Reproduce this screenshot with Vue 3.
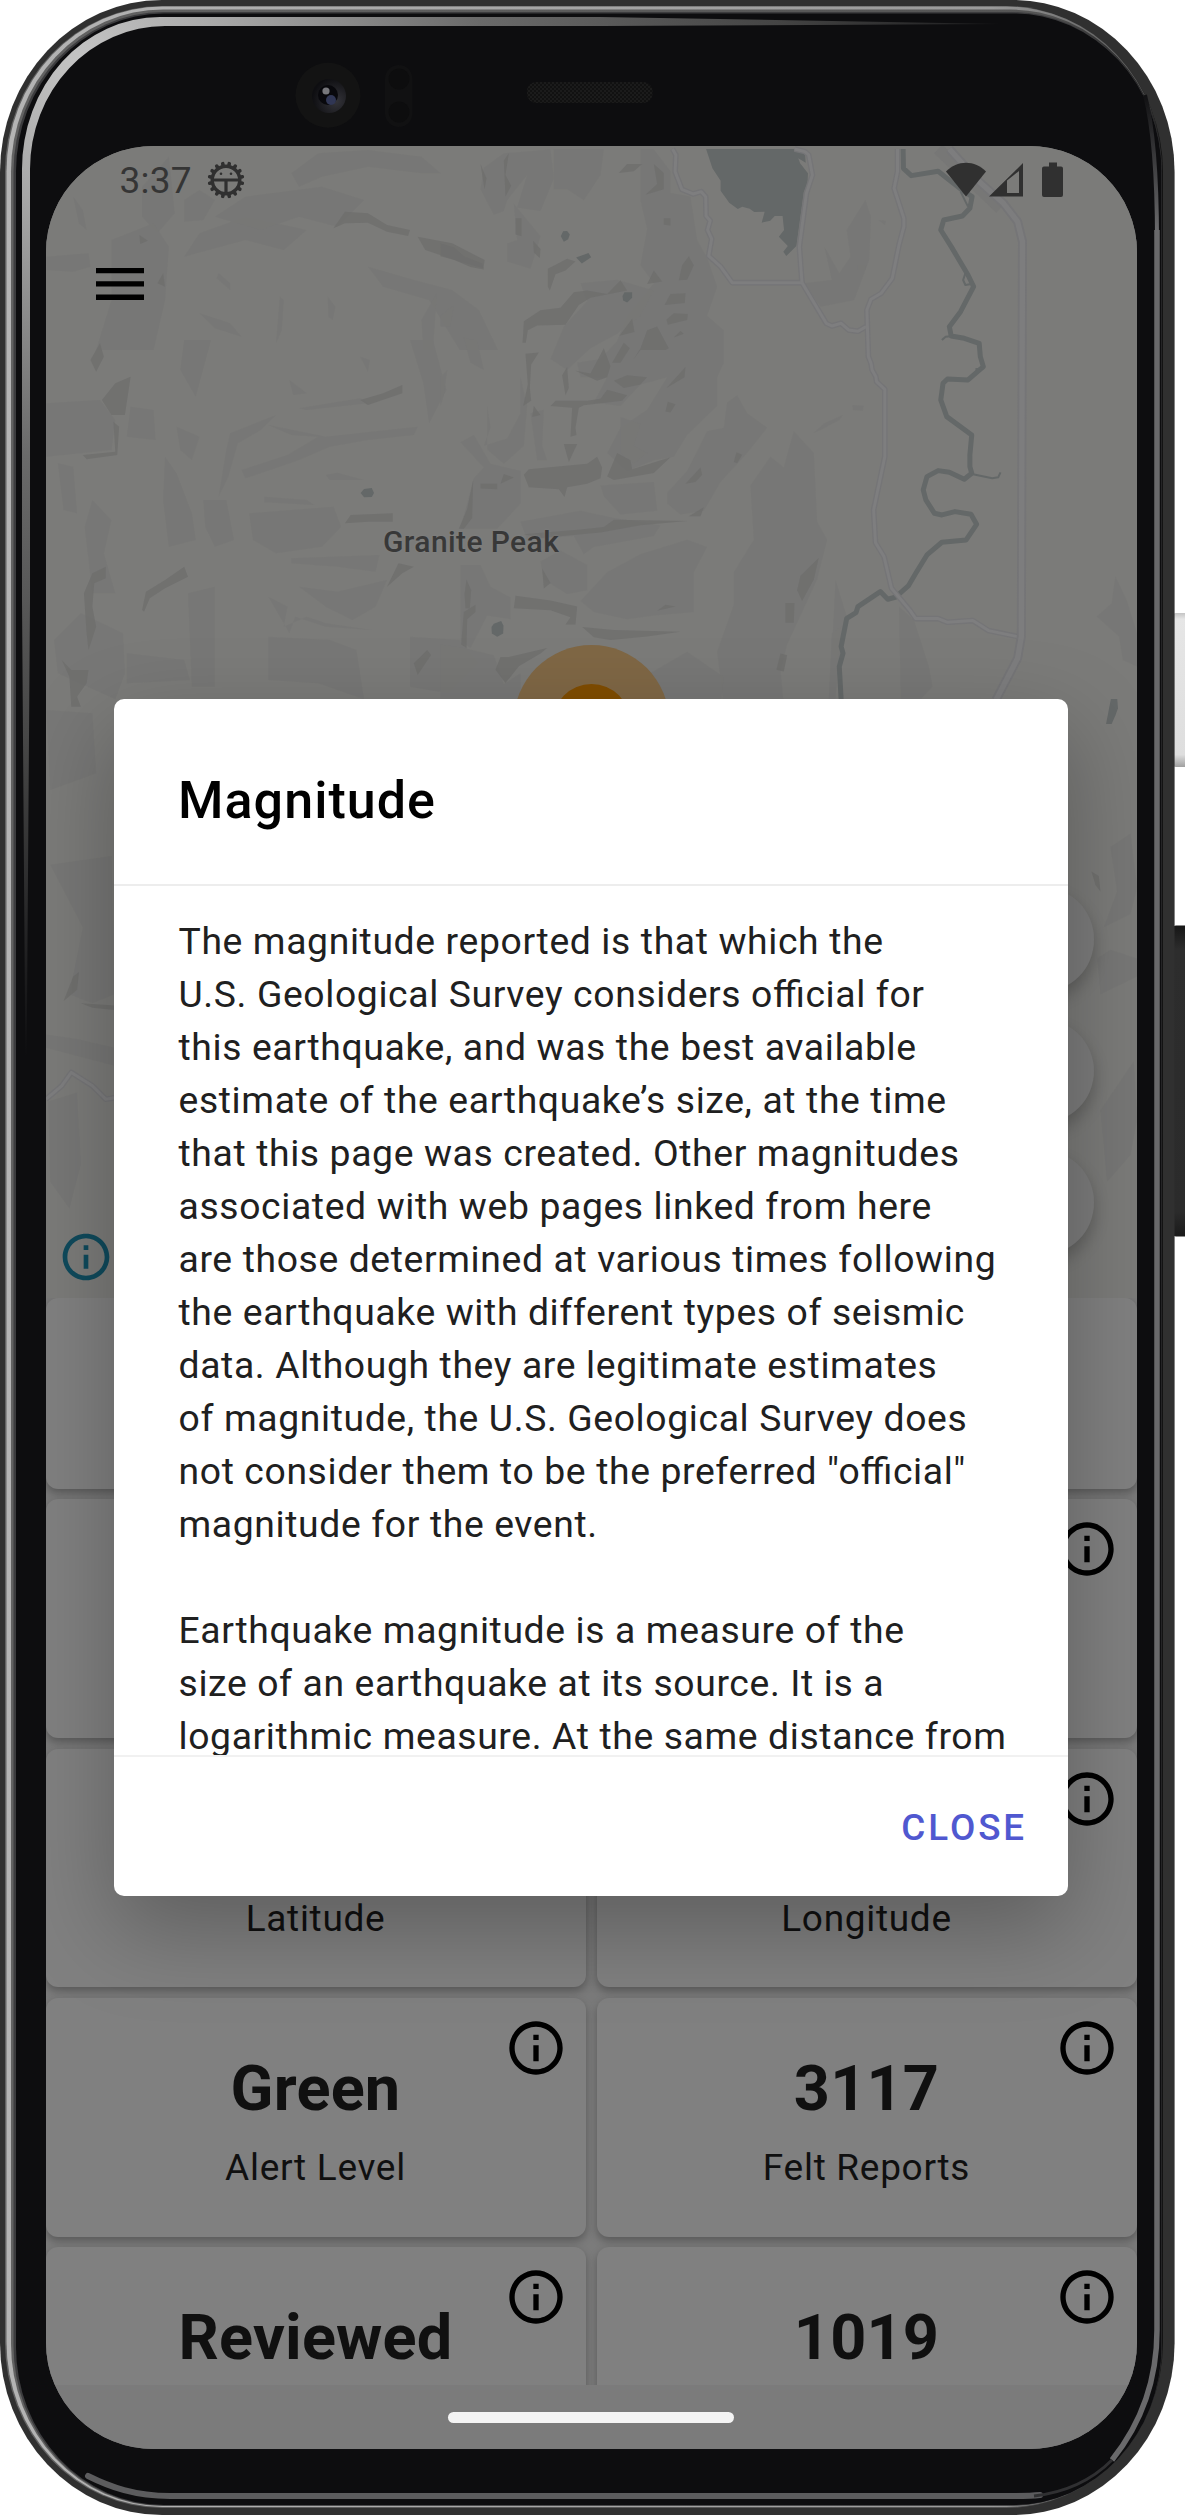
<script setup>
const lines = [
  'The magnitude reported is that which the',
  'U.S. Geological Survey considers official for',
  'this earthquake, and was the best available',
  'estimate of the earthquake’s size, at the time',
  'that this page was created. Other magnitudes',
  'associated with web pages linked from here',
  'are those determined at various times following',
  'the earthquake with different types of seismic',
  'data. Although they are legitimate estimates',
  'of magnitude, the U.S. Geological Survey does',
  'not consider them to be the preferred "official"',
  'magnitude for the event.',
  '',
  'Earthquake magnitude is a measure of the',
  'size of an earthquake at its source. It is a',
  'logarithmic measure. At the same distance from',
]

const cards = [
  { value: '', label: '', wide: true },
  { value: '', label: '', info: true },
  { value: '', label: '', info: true },
  { value: '', label: 'Latitude', info: true },
  { value: '', label: 'Longitude', info: true },
  { value: 'Green', label: 'Alert Level', info: true },
  { value: '3117', label: 'Felt Reports', info: true },
  { value: 'Reviewed', label: '', info: true },
  { value: '1019', label: '', info: true },
]

// Hill shading facets, grouped by map tile: soft slopes first, then ridges.
const reliefNW = {
  soft: [
    '480,770 520,700 640,650 720,670 800,690 740,750 640,720',
    '760,520 830,460 960,450 1100,470 1150,520 1100,520 960,500 840,530 780,560',
    '960,800 1080,840 1180,870 1250,930 1300,1050 1200,1050 1120,900 1000,860',
    '120,770 230,760 235,800 190,815 120,810',
    '520,940 600,970 630,1010 560,985',
    '1100,960 1140,880 1130,1050 1105,1050',
    '190,590 215,630 225,690 205,670',
    '370,560 440,470 455,640 410,700 370,650',
    '290,720 400,670 440,740 430,900 400,1050 250,1050 290,900',
    '640,590 840,560 950,600 880,680 780,650 680,690 560,650',
    '570,820 600,850 600,870 565,835',
    '720,1030 730,890 740,900 735,990',
    '855,890 875,920 868,960 857,950',
    '480,600 520,570 560,600 530,660 480,665',
  ],
  hard: [
    '870,685 900,635 960,640 1010,675 1070,690 1065,708 1010,695 960,668 900,670',
    '1090,710 1180,730 1265,780 1262,805 1200,785 1110,750',
    '410,850 425,820 430,860',
    '363,705 385,722 365,732',
  ],
}
const reliefW = {
  soft: [
    '600,280 720,225 680,270 620,310 595,410 570,470 590,330',
    '700,255 850,290 1090,260 1080,285 960,300 860,320 780,360 640,415 630,390 750,345 830,290 760,285',
    '780,205 940,175 960,190 800,210',
    '760,655 990,645 980,695 880,680 760,670',
    '780,740 880,755 1010,720 980,800 920,840 850,800',
    '330,940 480,960 495,1020 330,1030',
    '700,890 860,900 930,930 950,1078 830,1030 700,1020',
    '430,350 460,400 500,520 510,600 440,620 425,480',
    '120,190 260,180 300,240 290,330 120,350',
    '340,200 400,210 405,300 330,290',
    '460,260 520,290 500,360 470,330',
    '650,520 870,500 890,560 840,620 720,640 660,600',
    '1070,0 1130,0 1165,150 1120,250 1105,130',
    '530,480 590,480 610,600 560,620 535,560',
    '690,470 800,480 820,495 690,487',
    '850,405 880,398 950,420 860,420',
    '490,760 560,740 560,1040 500,1040',
    '150,370 190,380 200,520 165,510',
    '240,480 290,540 270,640 300,760 240,760 220,560',
    '140,900 210,820 320,880 325,1000 300,1078 150,1000',
    '120,1110 240,1120 250,1300 130,1350',
    '480,0 550,0 510,170 470,90',
    '940,50 965,60 960,95',
    '755,120 800,160 765,165',
    '1070,890 1200,900 1250,970 1170,1060 1070,1040',
    '700,770 750,800 740,860 800,830 850,850 970,870 850,860 770,830 755,880',
  ],
  hard: [
    '235,60 260,10 270,50 250,95',
    '265,180 300,130 340,110 325,225 290,225',
    '215,345 300,335 295,245 310,260 305,345 225,358',
    '940,180 1000,160 1050,135 1050,160 960,195',
    '900,550 915,525 1025,520 1025,545 960,545',
    '370,810 380,755 430,720 480,680 490,710 430,745 390,775 375,815',
    '225,880 218,760 240,700 275,680 275,715 245,730 240,800 250,860 230,930',
    '1010,740 1040,670 1080,680 1050,700',
    '1080,970 1115,930 1125,945 1090,1005',
    '160,960 185,990 230,990 225,1030 200,1070 210,1100 185,1100 180,1010',
  ],
}
const reliefC = {
  soft: [
    '130,60 190,20 330,10 340,90 300,180 230,170 260,80 200,150 190,180 160,190 120,120',
    '340,10 490,10 480,80 430,150 380,120 340,120',
    '600,10 640,10 690,70 690,130 750,140 770,260 800,310 830,390 800,470 850,510 850,600 830,640 830,720 740,800 700,860 640,870 560,900 500,850 540,780 620,730 680,640 600,660 540,720 460,710 500,640 420,640 410,600 480,590 530,540 560,470 640,380 600,330 620,230 600,150',
    '420,380 530,370 640,400 600,470 530,520 450,560 380,620 330,590 370,500 440,430',
    '220,160 300,250 270,340 200,320 200,270 230,260',
    '0,640 20,620 10,690 0,720',
    '70,530 110,540 130,620 90,600',
    '60,820 100,800 150,880 240,900 240,990 170,1060 60,1060 100,920 130,890',
    '140,720 150,780 130,830 200,810 240,740 240,640 260,720 250,830 190,880 140,840',
    '270,740 310,730 305,830 320,870 290,870',
    '540,750 600,770 580,830 620,850 580,880 540,850',
    '480,940 640,930 650,1010 540,1020 490,970',
    '680,960 740,900 800,790 850,780 860,710 890,690 920,740 980,780 920,850 840,930 790,1010 720,1020 680,990',
    '240,1040 420,1010 520,1030 660,1050 640,1080 460,1110 430,1130 400,1080 260,1090',
    '300,1150 360,1120 440,1160 440,1230 380,1240 310,1200',
    '420,1260 500,1180 600,1130 740,1090 800,1110 760,1180 760,1290 640,1300 560,1310 460,1290',
    '930,940 990,860 1030,890 1060,790 1120,850 1130,1040 1160,1090 1130,1200 1100,1260 1040,1380 1020,1450 1030,1550 850,1550 830,1400 880,1270 880,1180 940,1090',
    '0,1380 70,1390 160,1410 190,1490 240,1460 240,1550 0,1550',
    '610,1470 740,1400 850,1470 840,1550 680,1550',
    '60,1160 120,1160 150,1220 210,1250 210,1310 140,1300 90,1390 60,1370',
    '0,470 40,440 30,500 0,500',
  ],
  hard: [
    '0,270 40,280 70,305 125,325 130,342 90,335 40,315 0,305',
    '120,50 138,90 132,120',
    '190,40 205,20 195,80 212,110 195,140',
    '225,200 243,200 243,250 225,245',
    '278,262 300,285 298,310 280,295',
    '322,340 380,312 405,320 375,345 345,355 328,400 322,390',
    '248,520 250,485 300,455 360,448 400,405 440,400 500,410 540,372 560,400 450,420 415,440 375,495 290,497 262,510 256,545 246,545',
    '255,575 295,572 272,605 268,670 272,705 248,720 262,660',
    '330,720 345,705 440,705 480,700 500,675 560,690 545,705 430,718 415,725 405,780 408,800 390,805 395,725',
    '365,635 380,612 385,670 375,690',
    '405,622 450,630 490,560 510,610 500,640 470,650',
    '520,650 560,635 620,640 600,660 550,670',
    '537,525 575,478 582,515',
    '580,590 600,560 620,510 650,500 685,560 675,565 600,565',
    '515,600 550,545 568,560 540,600',
    '265,895 440,880 470,860 485,890 480,920 440,935 380,945 372,972 355,950 265,945 250,910',
    '500,915 530,850 570,870 575,895 690,862 640,905 520,925',
    '250,1075 420,1062 490,1055 520,1035 740,1038 600,1050 480,1070 300,1085',
    '735,935 780,890 785,910 765,930',
    '745,1025 790,1000 780,1025',
    '880,875 888,848 905,855 890,878',
    '678,670 735,612 732,640',
    '620,382 640,345 665,375',
    '715,372 725,330 745,305 760,330 740,370',
    '640,50 670,75 670,120 615,135 650,105',
    '535,75 560,50 605,50 580,70',
    '670,200 690,200 690,220 670,218',
    '678,480 700,463 742,465 740,482 682,495',
    '672,440 690,410 735,408 733,435',
    '700,530 720,512 730,520',
    '675,735 682,708 705,715 690,738',
    '220,1280 225,1245 330,1258 410,1275 405,1325 375,1325 390,1305 330,1285',
    '425,1332 520,1340 720,1345 620,1358 510,1368 460,1360',
    '165,1450 180,1415 205,1415 320,1390 300,1405 235,1440 195,1487',
    '55,1060 80,1005 98,925 95,1030 70,1060',
    '120,935 170,935 170,950 120,948',
    '180,935 190,908 220,918',
    '72,1240 78,1200 92,1230 88,1280 75,1280',
    '70,1290 105,1270 105,1290 80,1310 78,1390 62,1380',
    '305,1170 330,1210 310,1225',
    '650,1287 675,1270 705,1275',
    '1070,1230 1080,1190 1135,1140 1120,1200 1085,1260',
    '1035,1265 1062,1265 1060,1320 1035,1320',
    '1008,1450 1020,1405 1040,1410 1030,1455',
    '370,825 410,825 385,875',
    '280,720 300,745 275,750',
  ],
}
const reliefE = {
  soft: [
    '800,1820 840,1860 880,2000 890,2060 860,2096 805,2096',
    '570,1300 600,1270 650,1245 640,1260 590,1290',
    '1330,1850 1370,1810 1380,1730 1410,1800 1438,1900 1438,2000 1400,1980 1390,1910',
    '600,740 640,820 670,770 660,690 710,600 725,650 720,780 680,900 590,920 545,850 620,840',
    '675,1215 705,1217 703,1232 677,1230',
    '690,795 712,795 710,810 690,810',
    '745,660 765,662 762,675',
    '630,1740 660,1850 640,1990 620,1960',
    '620,1900 645,1880 630,2096 612,2096',
  ],
}
const roads = [
  'M193,447 202,465 200,515 218,568 248,582 270,575 282,590 283,648 294,662 287,690 298,717 290,768 322,800 353,848 540,848 605,970 620,978 645,970 665,990 690,994 712,980',
  'M520,447 548,455 558,465 568,525 552,580 533,740 540,848',
  'M796,447 796,515 787,565 813,655 813,680 800,735 782,835 752,880 725,898 714,930 718,1070 725,1090 728,1110 738,1130 740,1145 762,1168 762,1370 732,1530 737,1628 760,1670 780,1765 830,1832 845,1856 905,1856 930,1867 998,1862 1040,1892 1118,1910',
]
const highway = 'M935,447 1010,540 1080,610 1118,665 1131,725 1128,1910 1118,1975 1060,2100'
const gearTeeth = Array.from({ length: 16 }, (_, i) => i * 22.5)
</script>

<template>
  <div class="stage">
    <div class="phone">
      <svg class="body" viewBox="0 0 1185 2515" aria-hidden="true">
        <defs>
          <linearGradient id="rimSide" x1="0" x2="1" y1="0" y2="0">
            <stop offset="0" stop-color="#b4b4b4" />
            <stop offset="0.85" stop-color="#9a9a9a" />
            <stop offset="0.985" stop-color="#555" />
            <stop offset="1" stop-color="#151515" />
          </linearGradient>
          <linearGradient id="rimSoft" x1="0" x2="1" y1="0" y2="0">
            <stop offset="0" stop-color="#626262" />
            <stop offset="0.9" stop-color="#555" />
            <stop offset="1" stop-color="#111" />
          </linearGradient>
          <radialGradient id="glare" gradientUnits="userSpaceOnUse" cx="80" cy="60" r="1000">
            <stop offset="0" stop-color="#c4c4c4" />
            <stop offset="0.15" stop-color="#a6a6a6" />
            <stop offset="0.4" stop-color="#6a6a6a" />
            <stop offset="0.7" stop-color="#444" />
            <stop offset="1" stop-color="#0d0d0f" />
          </radialGradient>
          <linearGradient id="edge" gradientUnits="userSpaceOnUse" x1="0" x2="0" y1="90" y2="230">
            <stop offset="0" stop-color="#0d0d0f" />
            <stop offset="1" stop-color="#69696b" />
          </linearGradient>
          <linearGradient id="power" x1="0" x2="0" y1="0" y2="1">
            <stop offset="0" stop-color="#c4c4c4" />
            <stop offset="0.04" stop-color="#e6e6e6" />
            <stop offset="0.92" stop-color="#dedede" />
            <stop offset="1" stop-color="#a0a0a0" />
          </linearGradient>
          <linearGradient id="volume" x1="0" x2="0" y1="0" y2="1">
            <stop offset="0" stop-color="#161616" />
            <stop offset="0.08" stop-color="#2d2d2d" />
            <stop offset="0.92" stop-color="#2b2b2b" />
            <stop offset="1" stop-color="#1a1a1a" />
          </linearGradient>
          <pattern id="mesh" width="4" height="4" patternUnits="userSpaceOnUse">
            <rect width="4" height="4" fill="#1b1b1b" />
            <rect width="2" height="2" fill="#111" />
            <rect x="2" y="2" width="2" height="2" fill="#111" />
          </pattern>
          <radialGradient id="lens" cx="0.7" cy="0.65" r="0.7">
            <stop offset="0" stop-color="#34343a" />
            <stop offset="1" stop-color="#0e0e11" />
          </radialGradient>
        </defs>
        <rect x="1173" y="613" width="16" height="154" rx="3" fill="url(#power)" />
        <rect x="1173" y="925.5" width="16" height="311" rx="3" fill="url(#volume)" />
        <rect width="1174.6" height="2515" rx="162" ry="172" fill="#303030" />
        <rect x="5" y="6" width="1158" height="2502" rx="157" ry="166" fill="url(#rimSoft)" />
        <rect x="6.5" y="6.5" width="1156" height="2500.5" rx="156" ry="165" fill="url(#rimSide)" />
        <rect x="11" y="9.5" width="1151" height="2496.5" rx="152" ry="162" fill="url(#rimSoft)" />
        <rect x="13.5" y="12" width="1148.5" height="2493.5" rx="150" ry="160" fill="#3c3c3e" />
        <rect x="16" y="13.5" width="1145.5" height="2491.5" rx="148" ry="158" fill="#0d0d0f" />
        <path fill="url(#glare)" d="M26 1150 L22 600 V170 A138 152 0 0 1 160 17 H600 L1000 24 L600 26 H165 A135 143 0 0 0 30 170 V600 Z" />
        <path fill="none" stroke="url(#edge)" stroke-width="4" d="M1145 95 C1154 130 1157 175 1157 240" />
        <path fill="none" stroke="#69696b" stroke-width="5.5" d="M1157 230 V2330 C1157 2375 1144 2420 1112 2460" />
        <path fill="none" stroke="#5c5c5e" stroke-width="6" stroke-linecap="round" d="M1040 2495 C1030 2496 1020 2496 1010 2496 H170 C135 2496 110 2487 88 2476" />
        <path fill="none" stroke="#303032" stroke-width="3" d="M1112 2460 C1088 2484 1060 2493 1034 2496" />
        <circle cx="328" cy="95.3" r="32.5" fill="#131313" />
        <circle cx="329" cy="96" r="17" fill="url(#lens)" />
        <circle cx="328" cy="95" r="10" fill="#08080c" />
        <circle cx="331" cy="100" r="5" fill="#303654" />
        <circle cx="326" cy="91" r="3.6" fill="#77777c" />
        <rect x="385" y="65" width="27.5" height="62" rx="13.7" fill="#111112" />
        <circle cx="399" cy="79" r="10.5" fill="#0d0d0e" />
        <circle cx="399" cy="112" r="10.5" fill="#0d0d0e" />
        <rect x="527" y="82" width="125.5" height="21" rx="9" fill="url(#mesh)" />
      </svg>

      <div class="screen">
        <section class="map">
          <svg class="terrain" viewBox="0 0 1091 1152" aria-hidden="true">
            <g transform="translate(-45.5 -146)">
              <g transform="scale(.3827 .3333)">
                <polygon v-for="p in reliefNW.soft" :key="p" class="soft" :points="p" />
                <polygon v-for="p in reliefNW.hard" :key="p" class="hard" :points="p" />
              </g>
              <g transform="translate(0 340) scale(.3827 .3333)">
                <polygon v-for="p in reliefW.soft" :key="p" class="soft" :points="p" />
                <polygon v-for="p in reliefW.hard" :key="p" class="hard" :points="p" />
                <polygon class="water" points="941,459 950,447 970,444 976,459 970,471 950,472" />
              </g>
              <g transform="translate(440 146) scale(.3333 .3612)">
                <polygon v-for="p in reliefC.soft" :key="p" class="soft" :points="p" />
                <polygon v-for="p in reliefC.hard" :key="p" class="hard" :points="p" />
                <polygon class="water" points="361,250 368,236 380,235 388,245 383,258 370,265" />
                <polygon class="water" points="407,309 444,296 452,308 424,325" />
                <polygon class="water" points="546,415 552,405 575,405 575,420 560,433 548,428" />
                <polygon class="water" points="153,1332 160,1323 182,1315 189,1328 188,1350 170,1359 154,1350" />
              </g>
              <g transform="translate(600 0) scale(.3731 .3333)">
                <polygon v-for="p in reliefE.soft" :key="p" class="soft" :points="p" />
                <polygon class="water" points="283,447 520,447 548,460 550,488 530,475 535,490 556,520 555,550 545,575 525,738 498,768 490,755 502,738 478,710 492,690 488,648 467,648 455,662 432,668 440,635 412,636 400,626 380,620 368,627 345,608 322,572 322,542 300,505" />
                <polygon class="water" points="1368,2097 1385,2097 1387,2125 1380,2147 1370,2172 1355,2172" />
                <path class="band" d="M905,447 1072,625" />
                <path class="river" d="M811,447 812,505 833,527 905,514 940,545 975,575 996,590 990,625 970,648 920,660 912,690 940,740 985,825 1000,860 965,935 935,980 940,1008 975,1015 1015,1030 1018,1070 1026,1100 985,1140 930,1137 918,1150 912,1200 928,1250 995,1305 990,1365 990,1400 995,1420 975,1438 935,1417 905,1412 875,1430 865,1470 872,1500 895,1540 915,1545 950,1535 993,1543 1008,1573 980,1620 915,1627 875,1665 845,1720 825,1758 790,1792 770,1798 750,1775 690,1820 685,1838 660,1855 645,1940 650,1960 640,2000 645,2100" />
                <path class="river thin" d="M995,1422 1050,1435 1066,1432 1072,1417 M965,575 985,620 M978,820 972,840 978,855 990,853 M915,1020 925,1010 945,1008 M1005,1108 1028,1105" />
                <path v-for="r in roads" :key="r" class="casing" :d="r" />
                <path v-for="r in roads" :key="r + 'f'" class="road" :d="r" />
                <path class="casing wide" :d="highway" />
                <path class="road wide" :d="highway" />
              </g>
              <g transform="translate(0 780) scale(.3827 .4464)">
                <polygon class="soft" points="130,190 290,170 298,480 240,500 180,480 215,330" />
                <polygon class="hard" points="165,495 190,440 205,430 200,470" />
                <polygon class="hard" points="210,500 298,505 298,515 240,510" />
                <polygon class="soft" points="119,570 200,580 298,600 298,640 119,600" />
                <polygon class="soft" points="125,720 200,700 210,860 180,960 130,900" />
                <path class="casing" d="M119,715 160,685 185,655 240,685 275,715 298,712" />
                <path class="road" d="M119,715 160,685 185,655 240,685 275,715 298,712" />
              </g>
              <g transform="translate(700 780) scale(.3333 .4464)">
                <polygon class="soft" points="1230,150 1290,120 1310,240 1290,300 1210,330 1250,250" />
                <polygon class="soft" points="1190,400 1230,380 1310,400 1310,440 1200,480" />
                <polygon class="soft" points="1200,740 1300,630 1310,760 1290,840 1220,900" />
                <polygon class="hard" points="1173,205 1195,215 1200,250 1185,235" />
              </g>
              <circle cx="591" cy="723" r="78" fill="#7f6745" />
              <circle cx="591" cy="723" r="39" fill="#804d00" />
            </g>
          </svg>

          <header class="status">
            <span class="clock">3:37</span>
            <svg class="bug" viewBox="-20 -20 40 40" aria-hidden="true">
              <rect v-for="a in gearTeeth" :key="a" x="-1.8" y="-18.4" width="3.6" height="6" rx="1.6" :transform="`rotate(${a + 11.25})`" />
              <circle r="13.8" fill="none" stroke="#303030" stroke-width="3.4" />
              <path d="M-13 -1.6 H13 V1.6 H1.6 V13 H-1.6 V1.6 H-13 Z" />
              <circle cx="-5" cy="-6.300" r="1.300" />
              <circle cx="5" cy="-6.300" r="1.300" />
            </svg>
            <span class="spacer"></span>
            <svg class="signals" viewBox="0 0 118 36" aria-hidden="true">
              <path d="M0 9.600 C11 -2.200 29 -2.200 40 9.600 L20 34.500 Z" />
              <path fill-rule="evenodd" d="M43 34.500 L77 1 V34.500 Z M61 18.600 V31 H73 V9 Z" />
              <path d="M103 0.500 h8 v4 h4 a2 2 0 0 1 2 2 v26.500 a2 2 0 0 1 -2 2 h-17 a2 2 0 0 1 -2 -2 v-26.500 a2 2 0 0 1 2 -2 h5 z" />
            </svg>
          </header>

          <svg class="menu" viewBox="0 0 48 32" aria-hidden="true">
            <path d="M0 0h48v5.300H0zM0 13.300h48v5.300H0zM0 26.600h48v5.300H0z" />
          </svg>
          <span class="place">Granite Peak</span>
          <div class="fabs"><i></i><i></i><i></i></div>
          <svg class="attribution" viewBox="0 0 24 24" aria-hidden="true">
            <path d="M11 7h2v2h-2zm0 4h2v6h-2zm1-9C6.480 2 2 6.480 2 12s4.480 10 10 10 10-4.480 10-10S17.520 2 12 2zm0 18c-4.410 0-8-3.590-8-8s3.590-8 8-8 8 3.590 8 8-3.590 8-8 8z" />
          </svg>
        </section>

        <section class="cards">
          <article v-for="(c, i) in cards" :key="i" class="card" :class="{ wide: c.wide }">
            <svg v-if="c.info" class="info" viewBox="0 0 24 24" aria-hidden="true">
              <path d="M11 7h2v2h-2zm0 4h2v6h-2zm1-9C6.480 2 2 6.480 2 12s4.480 10 10 10 10-4.480 10-10S17.520 2 12 2zm0 18c-4.410 0-8-3.590-8-8s3.590-8 8-8 8 3.590 8 8-3.590 8-8 8z" />
            </svg>
            <strong>{{ c.value }}</strong>
            <span>{{ c.label }}</span>
          </article>
        </section>

        <footer class="nav"><i></i></footer>

        <div class="dialog" role="dialog">
          <h1>Magnitude</h1>
          <div class="text">
            <p v-for="(l, i) in lines" :key="i">{{ l }}</p>
          </div>
          <div class="actions"><button type="button">CLOSE</button></div>
        </div>
      </div>
    </div>
  </div>
</template>

<style>
body {
  margin: 0;
  background: #fff;
}
</style>

<style scoped>
.stage {
  width: 1185px;
  height: 2515px;
  overflow: hidden;
  background: #fff;
  font-family: Roboto, "Liberation Sans", sans-serif;
}
.phone {
  position: relative;
  box-sizing: border-box;
  width: 1185px;
  height: 2515px;
  padding: 146px 0 0 45.5px;
}
.body {
  position: absolute;
  inset: 0;
  width: 1185px;
  height: 2515px;
}
.screen {
  position: relative;
  display: flex;
  flex-direction: column;
  width: 1091px;
  height: 2303px;
  overflow: hidden;
  border-radius: 108px / 106px;
  background: #7b7b7b;
}

/* map */
.map {
  position: relative;
  flex: none;
  height: 1151.5px;
  background: #7b7b79;
}
.terrain {
  position: absolute;
  top: 0;
  left: 0;
  width: 1091px;
  height: 1152px;
}
.soft {
  fill: #777775;
  fill-opacity: 0.8;
}
.hard {
  fill: #6e6e6c;
  fill-opacity: 0.75;
}
.water {
  fill: #646868;
}
.band {
  fill: none;
  stroke: #747474;
  stroke-width: 12px;
  stroke-opacity: 0.6;
  vector-effect: non-scaling-stroke;
}
.river,
.road,
.casing {
  fill: none;
  stroke-linejoin: round;
  vector-effect: non-scaling-stroke;
}
.river {
  stroke: #646868;
  stroke-width: 5px;
}
.river.thin {
  stroke-width: 2px;
}
.casing {
  stroke: #757577;
  stroke-width: 5.6px;
}
.road {
  stroke: #7e7e7f;
  stroke-width: 3px;
}
.casing.wide {
  stroke-width: 9px;
}
.road.wide {
  stroke: #7d7d7e;
  stroke-width: 5.4px;
}
.status {
  position: relative;
  display: flex;
  align-items: center;
  height: 68px;
  padding: 0 73px 0 74px;
  fill: #303030;
  color: #353535;
}
.clock {
  padding-top: 1px;
  font-size: 37px;
  line-height: 68px;
  letter-spacing: 0.2px;
}
.bug {
  width: 40px;
  height: 40px;
  margin-left: 14px;
}
.spacer {
  flex: 1;
}
.signals {
  width: 118px;
  height: 36px;
}
.menu {
  position: relative;
  display: block;
  width: 48px;
  height: 32px;
  margin: 53.5px 0 0 50px;
}
.place {
  position: absolute;
  left: 337.5px;
  top: 375.5px;
  font-size: 30px;
  font-weight: 500;
  line-height: 40px;
  letter-spacing: 0.4px;
  color: #383838;
  white-space: nowrap;
  text-shadow: 0 0 3px #838383;
}
.fabs {
  position: absolute;
  left: 944px;
  top: 741px;
  display: flex;
  flex-direction: column;
  gap: 27px;
}
.fabs i {
  width: 104.5px;
  height: 104.5px;
  border-radius: 50%;
  background: #7c7c7c;
  box-shadow: 0 8px 16px rgba(0, 0, 0, 0.22);
}
.attribution {
  position: absolute;
  left: 12.5px;
  top: 1083px;
  width: 56px;
  height: 56px;
  fill: #0f4a5c;
}

/* cards */
.cards {
  display: grid;
  flex: none;
  grid-template-columns: 540px 540px;
  grid-template-rows: 191px repeat(4, 238.7px);
  gap: 10.7px 11px;
  height: 1087.5px;
  overflow: hidden;
}
.card {
  position: relative;
  display: flex;
  flex-direction: column;
  align-items: center;
  box-sizing: border-box;
  padding-top: 54px;
  border-radius: 12px;
  background: #808080;
  box-shadow: 0 4px 8px rgba(0, 0, 0, 0.28);
  color: #101010;
}
.card.wide {
  grid-column: 1 / -1;
}
.card strong {
  height: 81px;
  font-size: 63px;
  font-weight: 700;
  line-height: 74px;
  letter-spacing: 0.2px;
}
.card span {
  font-size: 37px;
  line-height: 70px;
  letter-spacing: 0.7px;
}
.info {
  position: absolute;
  top: 18px;
  right: 18px;
  width: 64px;
  height: 64px;
}

.nav {
  display: flex;
  flex: 1;
  align-items: flex-start;
  justify-content: center;
  background: #7b7b7b;
}
.nav i {
  width: 286.5px;
  height: 10.5px;
  margin-top: 27px;
  border-radius: 6px;
  background: #f4f4f4;
}

/* dialog */
.dialog {
  position: absolute;
  left: 68.5px;
  top: 553.3px;
  display: flex;
  flex-direction: column;
  width: 953.5px;
  height: 1196.7px;
  overflow: hidden;
  border-radius: 10px;
  background: #fff;
  box-shadow: 0 33px 90px rgba(0, 0, 0, 0.27);
}
.dialog h1 {
  flex: none;
  box-sizing: border-box;
  height: 186.5px;
  margin: 0;
  padding-left: 64px;
  border-bottom: 2px solid #ededed;
  font-size: 52px;
  font-weight: 500;
  line-height: 203px;
  letter-spacing: 1.05px;
  color: #000;
}
.text {
  flex: 1;
  padding: 29px 0 0 64.5px;
  overflow: hidden;
  font-size: 37.3px;
  letter-spacing: 0.63px;
  color: #202020;
  font-feature-settings: "liga" 1;
}
.text p {
  height: 53px;
  margin: 0;
  line-height: 53px;
  white-space: nowrap;
}
.actions {
  display: flex;
  flex: none;
  align-items: center;
  justify-content: flex-end;
  box-sizing: border-box;
  height: 141px;
  padding: 3px 40.5px 0 0;
  border-top: 2px solid #f1f1f1;
}
.actions button {
  padding: 0;
  border: 0;
  background: none;
  font: 500 36.8px Roboto, sans-serif;
  letter-spacing: 2.9px;
  color: #5058d0;
}
</style>
